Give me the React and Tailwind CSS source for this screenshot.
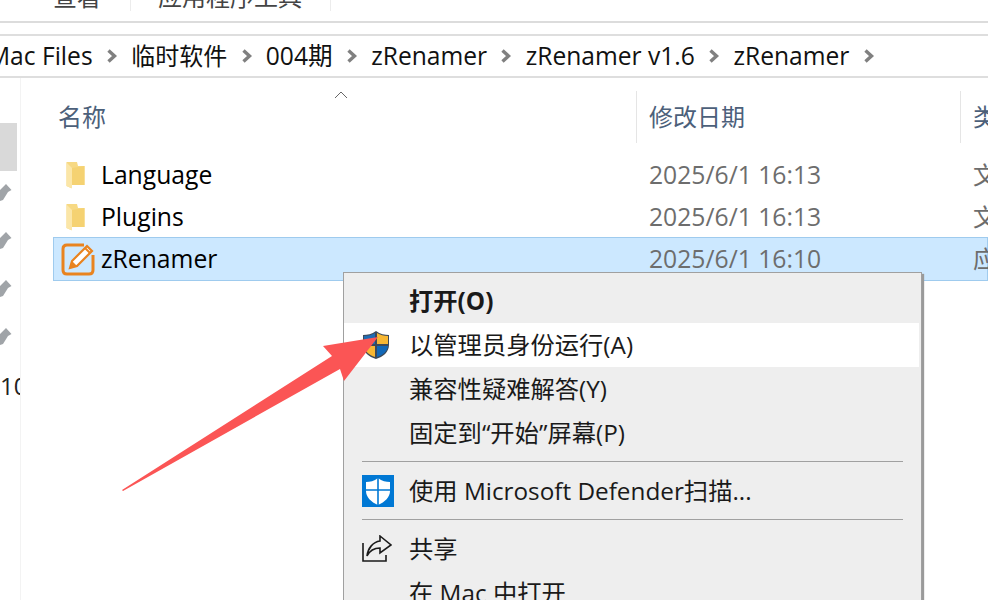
import React from 'react';

const FONT = "font-['Open_Sans','Noto_Sans_CJK_SC',sans-serif]";
const CRUMBS = ['Mac Files', '临时软件', '004期', 'zRenamer', 'zRenamer v1.6', 'zRenamer'];

const Chevron = () => (
  <svg width="12" height="16" viewBox="0 0 12 16" className="shrink-0">
    <path d="M2.5 2.5 L8.5 8 L2.5 13.5" fill="none" stroke="#808080" strokeWidth="3.4" />
  </svg>
);

const Pin = () => (
  <svg width="12" height="17" viewBox="0 0 12 17">
    <path d="M6 0 L11.5 6 L8 8 L3 16 L0 17 L0 6 Z" fill="#a0a4a8" />
  </svg>
);

const FolderIcon = () => (
  <svg width="20" height="28" viewBox="0 0 20 28" className="shrink-0">
    <path d="M0.5 1 L11 1 L12 5 L18.5 5 L18.5 24 L5 24 L5 27 L0.5 25 Z" fill="#f7d983" />
    <path d="M6 7 L18.5 5 L18.5 24 L6 24 Z" fill="#f5d272" />
    <path d="M0.5 1.5 L6 7 L6 27.5 L0.5 25 Z" fill="#fbe6a8" />
  </svg>
);

const AppIcon = () => (
  <svg width="34" height="34" viewBox="0 0 34 34" className="shrink-0">
    <path d="M23 3 H6 Q2 3 2 7 V28 Q2 32 6 32 H28 Q32 32 32 28 V13" fill="none" stroke="#e9831f" strokeWidth="3" />
    <path d="M9 26 L11 19 L26 4 L31 9 L16 24 Z" fill="#fff" stroke="#e9831f" strokeWidth="2.2" />
    <path d="M9 26 L11 19 L16 24 Z" fill="#e9831f" />
    <path d="M24 6 L29 11" stroke="#e9831f" strokeWidth="2" />
  </svg>
);

const UacShield = () => (
  <svg width="28" height="30" viewBox="0 0 28 30">
    <path d="M14 1 C10 4 5 5 1 5 V15 C1 22 7 27 14 29 C21 27 27 22 27 15 V5 C23 5 18 4 14 1 Z" fill="#3c4a5a" />
    <path d="M13 3 C10 5 6 6 2 6 V14 H13 Z" fill="#1f6cb5" />
    <path d="M15 3 C18 5 22 6 26 6 V14 H15 Z" fill="#f7b733" />
    <path d="M2 16 H13 V27 C7 25 2.5 21 2 16 Z" fill="#f7b733" />
    <path d="M15 16 H26 C25.5 21 21 25 15 27 Z" fill="#1168b8" />
  </svg>
);

const DefenderIcon = () => (
  <svg width="32" height="32" viewBox="0 0 32 32">
    <rect width="32" height="32" fill="#0078d4" />
    <path d="M16 3 C12 6 8 7 4 7 V16 C4 22 9 27 16 30 C23 27 28 22 28 16 V7 C24 7 20 6 16 3 Z" fill="#fff" />
    <path d="M16 3 V30 M4 15 H28" stroke="#0078d4" strokeWidth="1.6" />
  </svg>
);

const ShareIcon = () => (
  <svg width="30" height="28" viewBox="0 0 30 28" fill="none" stroke="#1a1a1a" strokeWidth="1.6">
    <path d="M1 8 V26 H24 V20" />
    <path d="M18 1 L29 10 L18 18 V13 C12 13 8 15 5 21 C6 13 11 7 18 6 Z" />
  </svg>
);

const FileRow = ({ icon, name, date, type, selected }) => (
  <div className={`flex items-center ${selected ? 'h-[44px] ml-[-1px] mt-[-1px] border border-[#9fcbee] bg-[#cce8ff]' : 'h-[42px]'}`}>
    <div className="w-[47px] flex shrink-0">{icon}</div>
    <span className="w-[548px] text-[24.7px] text-black shrink-0">{name}</span>
    <span className="w-[324px] text-[24.7px] text-[#6d6d6d] shrink-0">{date}</span>
    <span className="text-[24px] text-[#6d6d6d] whitespace-nowrap">{type}</span>
  </div>
);

const MenuItem = ({ icon, children, active, bold }) => (
  <div className={`h-[44px] flex items-center shrink-0 pl-[18px] ${active ? 'bg-white mr-[2px]' : ''}`}>
    <div className="w-[47px] shrink-0 flex">{icon}</div>
    <span className={`text-[24.3px] text-[#1a1a1a] whitespace-nowrap ${bold ? 'font-bold' : ''}`}>{children}</span>
  </div>
);

const Separator = () => <div className="h-px bg-[#a0a0a0] mx-[18px] mt-[6px] mb-[7px] shrink-0" />;

export default function App() {
  return (
    <div className={`relative w-[988px] h-[600px] overflow-hidden bg-white ${FONT}`}>
      {/* Ribbon, cut off at the top */}
      <div className="h-[23px] border-b-2 border-[#dcdcdc] overflow-hidden">
        <div className="flex items-end h-[11px] text-[24px] text-[#444]">
          <span className="w-[131px] shrink-0 pl-[53px] border-r border-[#ececec] leading-[28px] whitespace-nowrap">查看</span>
          <span className="w-[200px] shrink-0 pl-[27px] border-r border-[#ececec] leading-[28px] whitespace-nowrap">应用程序工具</span>
        </div>
      </div>

      {/* Breadcrumb */}
      <div className="mt-[11px] h-[44px] border-y-2 border-[#dedede] flex items-center gap-[13.3px] overflow-hidden">
        {CRUMBS.map((c, i) => (
          <React.Fragment key={i}>
            <span className={`text-[#111] whitespace-nowrap ${i === 1 ? 'text-[24px]' : 'text-[24.6px]'} ${i === 0 ? 'ml-[-12px]' : ''}`}>{c}</span>
            <Chevron />
          </React.Fragment>
        ))}
      </div>

      <div className="flex">
        {/* Quick access column */}
        <div className="w-[21px] h-[523px] shrink-0 border-r border-[#f3f3f3] pt-[45px] flex flex-col">
          <div className="w-[17px] h-[48px] bg-[#d9d9d9] shrink-0" />
          <div className="flex flex-col gap-[31px] mt-[13px]">
            <Pin />
            <Pin />
            <Pin />
            <Pin />
          </div>
          <span className="text-[24px] text-[#222] leading-[30px] mt-[26px] whitespace-nowrap overflow-hidden w-[20px]">10</span>
        </div>

        {/* File list */}
        <div className="flex-1 min-w-0 pl-[33px] pt-[13px]">
          <div className="h-[52px] flex items-center text-[24px] text-[#4c607a]">
            <span className="w-[582px] pl-[4px] shrink-0">名称</span>
            <span className="w-[324px] h-full flex items-center pl-[12px] border-l border-[#e5e5e5] shrink-0">修改日期</span>
            <span className="h-full flex items-center pl-[12px] border-l border-[#e5e5e5] whitespace-nowrap">类型</span>
          </div>
          <div className="mt-[11px]">
            <FileRow icon={<div className="ml-[12px]"><FolderIcon /></div>} name="Language" date="2025/6/1 16:13" type="文件夹" />
            <FileRow icon={<div className="ml-[12px]"><FolderIcon /></div>} name="Plugins" date="2025/6/1 16:13" type="文件夹" />
            <FileRow icon={<div className="ml-[7px]"><AppIcon /></div>} name="zRenamer" date="2025/6/1 16:10" type="应用程序" selected />
          </div>
        </div>
      </div>

      {/* Sort caret */}
      <svg width="14" height="8" viewBox="0 0 14 8" className="absolute left-[334px] top-[91px]">
        <path d="M1 7 L7 1 L13 7" fill="none" stroke="#666" strokeWidth="1" />
      </svg>

      {/* Context menu */}
      <div className="absolute left-[343px] top-[272px] w-[579px] h-[345px] bg-[#eeeeee] border border-[#a0a0a0] shadow-[2px_2px_1px_#9a9a9a] flex flex-col pt-[6px]">
        <MenuItem bold>打开(O)</MenuItem>
        <MenuItem active icon={<UacShield />}>以管理员身份运行(A)</MenuItem>
        <MenuItem>兼容性疑难解答(Y)</MenuItem>
        <MenuItem>固定到“开始”屏幕(P)</MenuItem>
        <Separator />
        <MenuItem icon={<DefenderIcon />}>使用 Microsoft Defender扫描...</MenuItem>
        <Separator />
        <MenuItem icon={<ShareIcon />}>共享</MenuItem>
        <MenuItem>在 Mac 中打开</MenuItem>
      </div>

      {/* Annotation arrow */}
      <svg width="988" height="600" className="absolute left-0 top-0 pointer-events-none">
        <polygon points="122,490 332,356 323,346 378,337 344,381 340,369 123,491" fill="#fb5555" />
      </svg>
    </div>
  );
}
